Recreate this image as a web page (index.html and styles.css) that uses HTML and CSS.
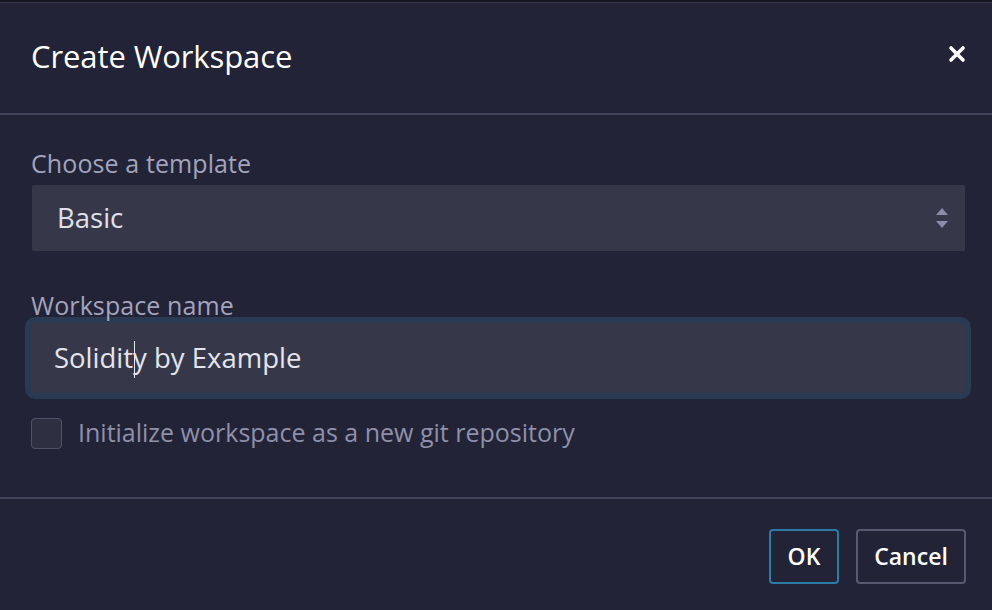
FILE: index.html
```html
<!DOCTYPE html>
<html>
<head>
<meta charset="utf-8">
<link rel="stylesheet" href="styles.css">
</head>
<body>
<div class="topbar"></div>
<div class="modal">
  <div class="header">
    <h1 class="title">Create Workspace</h1>
    <button class="close" aria-label="Close">
      <svg width="18" height="18" viewBox="0 0 18 18"><path d="M3 3 L15 15 M15 3 L3 15" stroke="#ffffff" stroke-width="3.6" stroke-linecap="round"/></svg>
    </button>
  </div>
  <div class="body">
    <label class="label">Choose a template</label>
    <div class="select">
      <span class="select-text">Basic</span>
      <svg class="arrows" width="14" height="24" viewBox="0 0 14 24"><path d="M7 2 L13 9 L1 9 Z" fill="#8a8ca8"/><path d="M1 15 L13 15 L7 22 Z" fill="#8a8ca8"/></svg>
    </div>
    <label class="label label2">Workspace name</label>
    <div class="input-ring">
      <div class="input"><span>Solidit</span><span class="caret"></span><span>y by Example</span></div>
    </div>
    <div class="check-row">
      <span class="checkbox"></span>
      <span class="check-label">Initialize workspace as a new git repository</span>
    </div>
  </div>
  <div class="footer">
    <button class="btn ok">OK</button>
    <button class="btn cancel">Cancel</button>
  </div>
</div>
</body>
</html>
```
FILE: styles.css
```css
html, body {
  margin: 0;
  padding: 0;
  background: #222336;
  width: 992px;
  height: 610px;
  overflow: hidden;
  font-family: "Open Sans", Lato, "Noto Sans", sans-serif;
}
.topbar {
  height: 2px;
  background: #15151f;
  border-bottom: 1px solid #353748;
}
.modal {
  display: flex;
  flex-direction: column;
  height: 607px;
}
.header {
  height: 112px;
  border-bottom: 2px solid #41435a;
  display: flex;
  align-items: center;
  justify-content: space-between;
  padding: 0 26px 0 31px;
  box-sizing: border-box;
}
.title {
  margin: 0;
  font-weight: 400;
  font-size: 31px;
  color: #ffffff;
  padding-bottom: 4px;
  letter-spacing: -0.1px;
}
.close {
  background: none;
  border: none;
  padding: 0;
  width: 18px;
  height: 18px;
  display: flex;
  margin-bottom: 8px;
}
.body {
  padding: 34px 27px 0 31px;
  height: 384px;
  box-sizing: border-box;
  border-bottom: 2px solid #41435a;
}
.label {
  display: block;
  font-size: 25px;
  font-weight: 500;
  color: #a2a3bd;
  line-height: 28px;
  height: 36px;
  letter-spacing: 0.1px;
}
.select {
  margin-left: 1px;
  height: 66px;
  background: #363849;
  border-radius: 2px;
  display: flex;
  align-items: center;
  justify-content: space-between;
  padding: 0 16px 0 25px;
  box-sizing: border-box;
}
.select-text {
  font-size: 27.5px;
  color: #e0e0ea;
  padding-bottom: 2px;
}
.label2 { margin-top: 40px; }
.input-ring {
  margin: -10px -6px 0 -6px;
  border: 6px solid #293a52;
  border-radius: 10px;
  background: #363849;
  height: 70px;
  display: flex;
  align-items: center;
}
.input {
  padding-left: 23px;
  font-size: 27.5px;
  color: #e4e4ee;
  display: flex;
  align-items: center;
  padding-bottom: 2px;
}
.caret {
  display: inline-block;
  width: 1px;
  height: 37px;
  background: #e4e4ee;
  margin: 4px -2px 0 1px;
}
.check-row {
  display: flex;
  align-items: center;
  margin-top: 16px;
}
.checkbox {
  width: 31px;
  height: 31px;
  border: 1.5px solid #4f5166;
  border-radius: 4px;
  background: #2e3042;
  box-sizing: border-box;
  display: inline-block;
}
.check-label {
  margin-left: 16px;
  font-size: 25px;
  color: #8f90aa;
  padding-bottom: 2px;
}
.footer {
  display: flex;
  justify-content: flex-end;
  gap: 17px;
  padding: 30px 26px 0 0;
}
.btn {
  font-family: inherit;
  background: transparent;
  color: #ffffff;
  font-size: 23px;
  font-weight: 600;
  border-radius: 4px;
  height: 55px;
  box-sizing: border-box;
  padding: 0 0 2px;
}
.ok { border: 2px solid #2b7ba5; width: 70px; }
.cancel { border: 2px solid #575970; width: 110px; }
```
